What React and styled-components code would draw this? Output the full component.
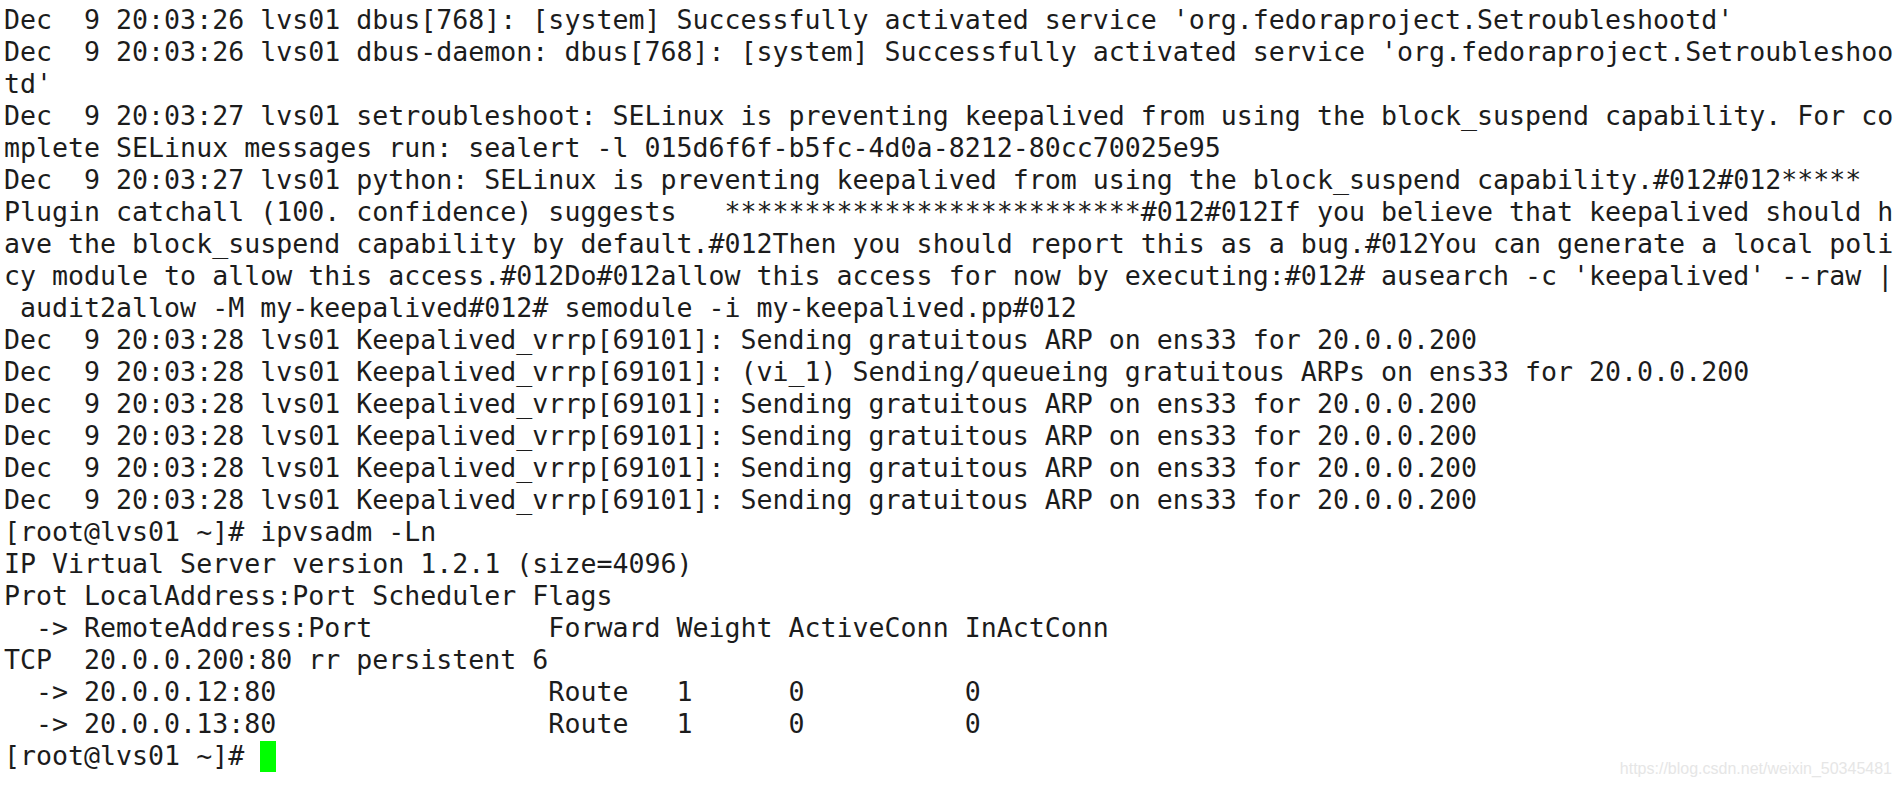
import React from 'react';
import styled, { createGlobalStyle } from 'styled-components';

const GlobalStyle = createGlobalStyle`
  html, body {
    margin: 0;
    padding: 0;
    background: #ffffff;
  }
  body {
    overflow: hidden;
  }
`;

const lines = [
  "Dec  9 20:03:26 lvs01 dbus[768]: [system] Successfully activated service 'org.fedoraproject.Setroubleshootd'",
  "Dec  9 20:03:26 lvs01 dbus-daemon: dbus[768]: [system] Successfully activated service 'org.fedoraproject.Setroubleshoo",
  "td'",
  "Dec  9 20:03:27 lvs01 setroubleshoot: SELinux is preventing keepalived from using the block_suspend capability. For co",
  "mplete SELinux messages run: sealert -l 015d6f6f-b5fc-4d0a-8212-80cc70025e95",
  "Dec  9 20:03:27 lvs01 python: SELinux is preventing keepalived from using the block_suspend capability.#012#012*****",
  "Plugin catchall (100. confidence) suggests   **************************#012#012If you believe that keepalived should h",
  "ave the block_suspend capability by default.#012Then you should report this as a bug.#012You can generate a local poli",
  "cy module to allow this access.#012Do#012allow this access for now by executing:#012# ausearch -c 'keepalived' --raw |",
  " audit2allow -M my-keepalived#012# semodule -i my-keepalived.pp#012",
  "Dec  9 20:03:28 lvs01 Keepalived_vrrp[69101]: Sending gratuitous ARP on ens33 for 20.0.0.200",
  "Dec  9 20:03:28 lvs01 Keepalived_vrrp[69101]: (vi_1) Sending/queueing gratuitous ARPs on ens33 for 20.0.0.200",
  "Dec  9 20:03:28 lvs01 Keepalived_vrrp[69101]: Sending gratuitous ARP on ens33 for 20.0.0.200",
  "Dec  9 20:03:28 lvs01 Keepalived_vrrp[69101]: Sending gratuitous ARP on ens33 for 20.0.0.200",
  "Dec  9 20:03:28 lvs01 Keepalived_vrrp[69101]: Sending gratuitous ARP on ens33 for 20.0.0.200",
  "Dec  9 20:03:28 lvs01 Keepalived_vrrp[69101]: Sending gratuitous ARP on ens33 for 20.0.0.200",
  "[root@lvs01 ~]# ipvsadm -Ln",
  "IP Virtual Server version 1.2.1 (size=4096)",
  "Prot LocalAddress:Port Scheduler Flags",
  "  -> RemoteAddress:Port           Forward Weight ActiveConn InActConn",
  "TCP  20.0.0.200:80 rr persistent 6",
  "  -> 20.0.0.12:80                 Route   1      0          0",
  "  -> 20.0.0.13:80                 Route   1      0          0",
];

const Screen = styled.div`
  position: relative;
  width: 1899px;
  height: 786px;
  overflow: hidden;
  background: #ffffff;
`;

const Terminal = styled.div`
  display: flex;
  flex-direction: column;
  padding: 4px 0 0 4px;
  font-family: "DejaVu Sans Mono", "Liberation Mono", monospace;
  font-size: 26.6px;
  color: #1c1c1c;
`;

const Line = styled.div`
  height: 32px;
  line-height: 32px;
  white-space: pre;
`;

const Cursor = styled.span`
  display: inline-block;
  width: 16px;
  height: 31px;
  margin-top: 1px;
  vertical-align: top;
  background: #00ff00;
`;

const Watermark = styled.div`
  position: absolute;
  right: 7px;
  bottom: 8px;
  font-family: "Liberation Sans", Arial, sans-serif;
  font-size: 16px;
  color: #e6e6e6;
  white-space: nowrap;
`;

export default function App() {
  return (
    <Screen>
      <GlobalStyle />
      <Terminal>
        {lines.map((text, i) => (
          <Line key={i}>{text}</Line>
        ))}
        <Line>
          {"[root@lvs01 ~]# "}
          <Cursor />
        </Line>
      </Terminal>
      <Watermark>https://blog.csdn.net/weixin_50345481</Watermark>
    </Screen>
  );
}
